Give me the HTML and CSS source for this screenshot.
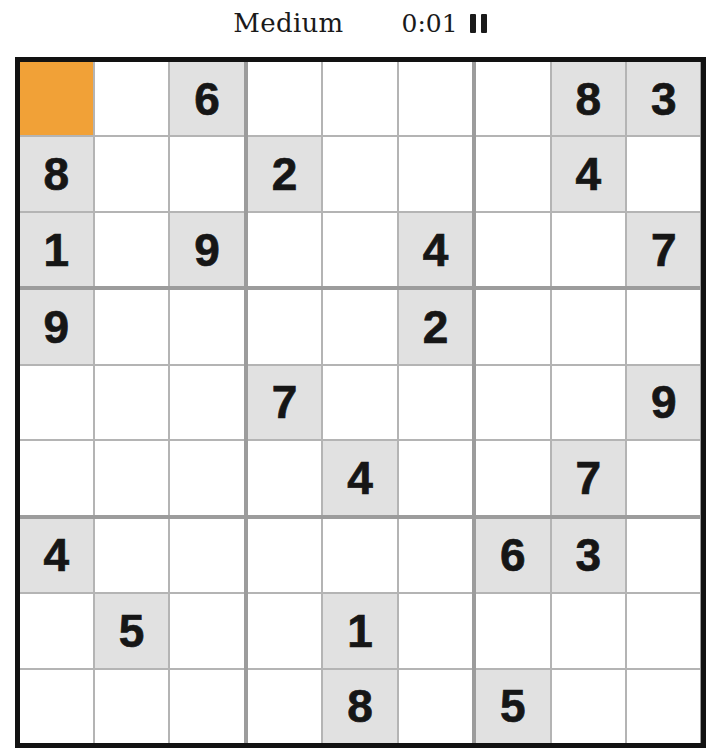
FILE: index.html
```html
<!DOCTYPE html>
<html lang="en">
<head>
<meta charset="utf-8">
<title>Sudoku</title>
<link rel="stylesheet" href="styles.css">
</head>
<body>
<header class="bar">
  <span class="level">Medium</span>
  <span class="timer">0:01</span>
  <span class="pause" aria-label="Pause"><i></i><i></i></span>
</header>
<div class="board">
  <div class="box">
    <div class="c sel"></div><div class="c"></div><div class="c g">6</div>
    <div class="c g">8</div><div class="c"></div><div class="c"></div>
    <div class="c g">1</div><div class="c"></div><div class="c g">9</div>
  </div>
  <div class="box">
    <div class="c"></div><div class="c"></div><div class="c"></div>
    <div class="c g">2</div><div class="c"></div><div class="c"></div>
    <div class="c"></div><div class="c"></div><div class="c g">4</div>
  </div>
  <div class="box">
    <div class="c"></div><div class="c g">8</div><div class="c g">3</div>
    <div class="c"></div><div class="c g">4</div><div class="c"></div>
    <div class="c"></div><div class="c"></div><div class="c g">7</div>
  </div>
  <div class="box">
    <div class="c g">9</div><div class="c"></div><div class="c"></div>
    <div class="c"></div><div class="c"></div><div class="c"></div>
    <div class="c"></div><div class="c"></div><div class="c"></div>
  </div>
  <div class="box">
    <div class="c"></div><div class="c"></div><div class="c g">2</div>
    <div class="c g">7</div><div class="c"></div><div class="c"></div>
    <div class="c"></div><div class="c g">4</div><div class="c"></div>
  </div>
  <div class="box">
    <div class="c"></div><div class="c"></div><div class="c"></div>
    <div class="c"></div><div class="c"></div><div class="c g">9</div>
    <div class="c"></div><div class="c g">7</div><div class="c"></div>
  </div>
  <div class="box">
    <div class="c g">4</div><div class="c"></div><div class="c"></div>
    <div class="c"></div><div class="c g">5</div><div class="c"></div>
    <div class="c"></div><div class="c"></div><div class="c"></div>
  </div>
  <div class="box">
    <div class="c"></div><div class="c"></div><div class="c"></div>
    <div class="c"></div><div class="c g">1</div><div class="c"></div>
    <div class="c"></div><div class="c g">8</div><div class="c"></div>
  </div>
  <div class="box">
    <div class="c g">6</div><div class="c g">3</div><div class="c"></div>
    <div class="c"></div><div class="c"></div><div class="c"></div>
    <div class="c g">5</div><div class="c"></div><div class="c"></div>
  </div>
</div>
</body>
</html>
```
FILE: styles.css
```css
html, body {
  margin: 0;
  padding: 0;
  background: #ffffff;
}

body {
  width: 720px;
  height: 756px;
  overflow: hidden;
  font-family: "DejaVu Serif", "Liberation Serif", serif;
  color: #1a1a1a;
}

.bar {
  height: 46px;
  display: flex;
  align-items: center;
  justify-content: center;
  padding-left: 0;
}

.level {
  font-size: 26px;
  font-weight: 400;
  letter-spacing: 0.3px;
  margin-right: 58px;
}

.timer {
  font-size: 25px;
  margin-right: 12px;
}

.pause {
  display: flex;
  gap: 5px;
  height: 19px;
  margin-top: 1px;
}

.pause i {
  display: block;
  width: 6px;
  height: 19px;
  background: #1a1a1a;
  border-radius: 1px;
}

.board {
  box-sizing: border-box;
  width: 691px;
  height: 691px;
  margin: 11px auto 0;
  border: 5px solid #121212;
  background: #9c9c9c;
  display: grid;
  grid-template-columns: repeat(3, 1fr);
  grid-template-rows: repeat(3, 1fr);
  gap: 4px;
}

.box {
  display: grid;
  grid-template-columns: repeat(3, 1fr);
  grid-template-rows: repeat(3, 1fr);
  gap: 2px;
  background: #b4b4b4;
}

.c {
  background: #ffffff;
  display: flex;
  align-items: center;
  justify-content: center;
  font-family: "Liberation Sans", Arial, sans-serif;
  font-weight: 700;
  font-size: 46px;
  color: #161616;
  line-height: 1;
  -webkit-text-stroke: 0.7px #161616;
}

.c.g {
  background: #e1e1e1;
}

.c.sel {
  background: #f1a137;
}
```
